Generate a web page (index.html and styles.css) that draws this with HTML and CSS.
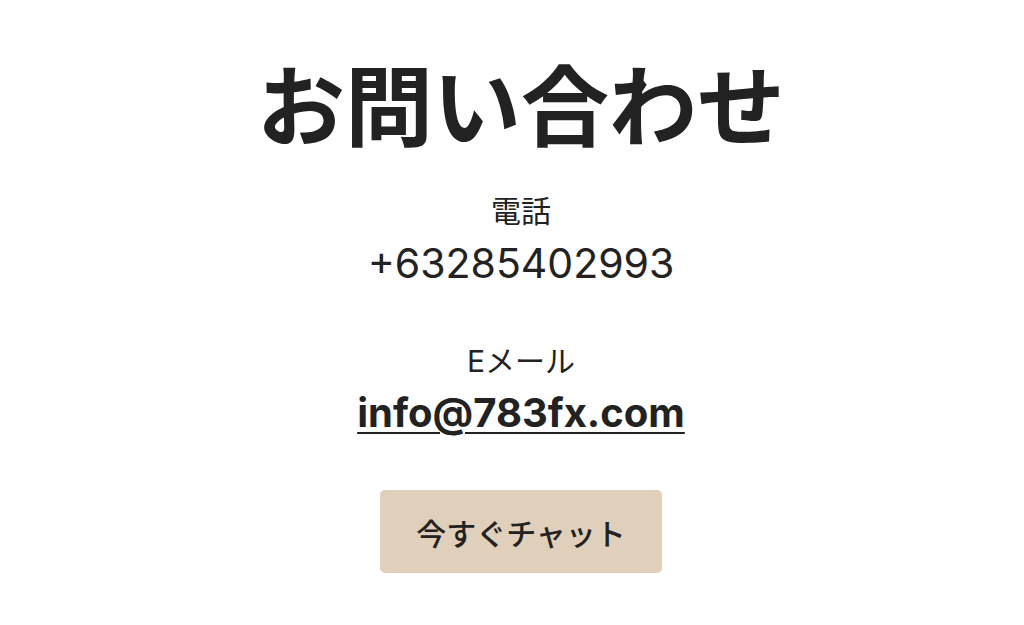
FILE: index.html
```html
<!DOCTYPE html>
<html lang="ja">
<head>
<meta charset="utf-8">
<link rel="stylesheet" href="styles.css">
</head>
<body>
<main class="contact">
  <h1 class="title">お問い合わせ</h1>
  <div class="item">
    <div class="label">電話</div>
    <div class="value">+63285402993</div>
  </div>
  <div class="item">
    <div class="label">Eメール</div>
    <a class="value email" href="#">info@783fx.com</a>
  </div>
  <a class="btn" href="#">今すぐチャット</a>
</main>
</body>
</html>
```
FILE: styles.css
```css
html, body {
  margin: 0;
  padding: 0;
  background: #ffffff;
}
body {
  font-family: Inter, "Noto Sans CJK JP", sans-serif;
  color: #222222;
}
.contact {
  display: flex;
  flex-direction: column;
  align-items: center;
  padding-top: 54px;
  padding-left: 18px;
}
.title {
  margin: 0;
  font-size: 88px;
  font-weight: 700;
  line-height: 106px;
  color: #222222;
}
.item {
  display: flex;
  flex-direction: column;
  align-items: center;
  margin-top: 30px;
}
.item + .item {
  margin-top: 53px;
}
.label {
  font-size: 30px;
  line-height: 42px;
}
.value {
  margin-top: 7px;
  font-size: 41px;
  line-height: 48px;
  color: #222222;
}
.email {
  font-size: 40px;
  font-weight: 700;
  text-decoration: underline;
  text-decoration-thickness: 2px;
  text-underline-offset: 5px;
}
.btn {
  margin-top: 53px;
  display: flex;
  align-items: center;
  justify-content: center;
  width: 282px;
  height: 83px;
  background: #e0cfba;
  border-radius: 5px;
  font-size: 30px;
  font-weight: 500;
  color: #222222;
  text-decoration: none;
}
```
